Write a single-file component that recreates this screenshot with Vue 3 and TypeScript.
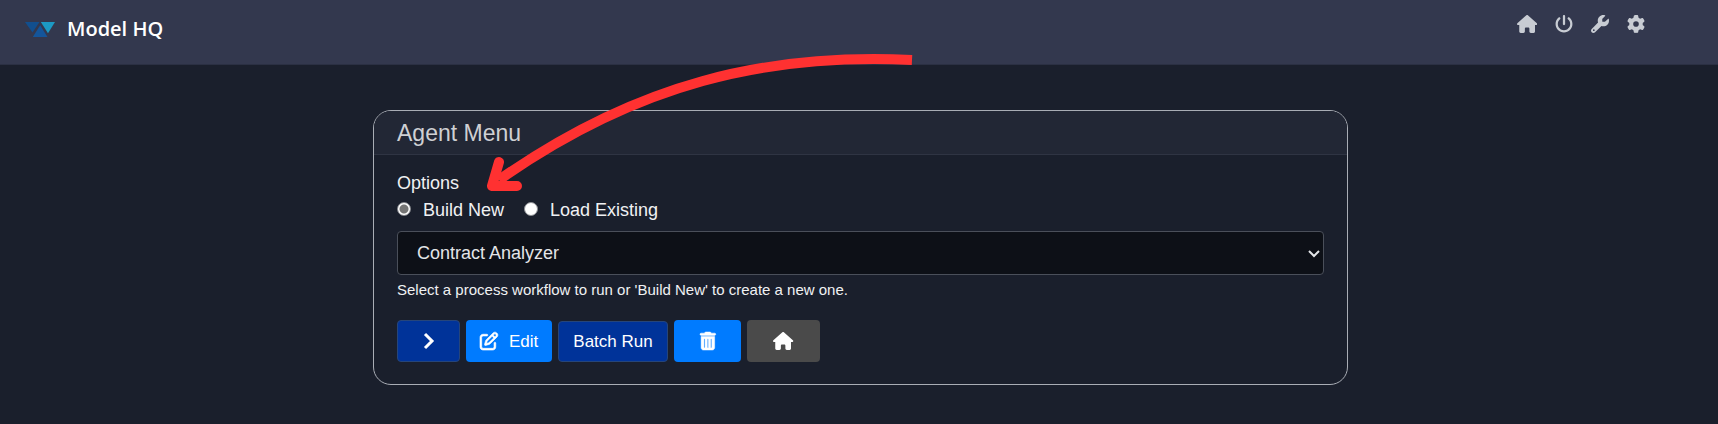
<script setup lang="ts">
import { ref } from 'vue'

interface Icon {
  box: string
  d: string
}

const icons: Record<string, Icon> = {
  home: {
    box: '0 0 576 512',
    d: 'M575.8 255.5c0 18-15 32.1-32 32.1l-32 0 .7 160.2c0 2.7-.2 5.4-.5 8.1l0 16.2c0 22.1-17.9 40-40 40l-16 0c-1.1 0-2.2 0-3.3-.1c-1.4 .1-2.8 .1-4.2 .1L416 512l-24 0c-22.1 0-40-17.9-40-40l0-24 0-64c0-17.7-14.3-32-32-32l-64 0c-17.7 0-32 14.3-32 32l0 64 0 24c0 22.1-17.9 40-40 40l-24 0-31.9 0c-1.5 0-3-.1-4.5-.2c-1.2 .1-2.4 .2-3.6 .2l-16 0c-22.1 0-40-17.9-40-40l0-112c0-.9 0-1.9 .1-2.8l0-69.7-32 0c-18 0-32-14-32-32.1c0-9 3-17 10-24L266.4 8c7-7 15-8 22-8s15 2 21 7L564.8 231.5c8 7 12 15 11 24z',
  },
  power: {
    box: '0 0 512 512',
    d: 'M288 32c0-17.7-14.3-32-32-32s-32 14.3-32 32l0 224c0 17.7 14.3 32 32 32s32-14.3 32-32l0-224zM143.5 120.6c13.6-11.3 15.4-31.5 4.1-45.1s-31.5-15.4-45.1-4.1C49.7 115.4 16 181.8 16 256c0 132.5 107.5 240 240 240s240-107.5 240-240c0-74.2-33.8-140.6-86.6-184.6c-13.6-11.3-33.8-9.4-45.1 4.1s-9.4 33.8 4.1 45.1c38.9 32.3 63.5 81 63.5 135.4c0 97.2-78.8 176-176 176s-176-78.8-176-176c0-54.4 24.7-103.1 63.5-135.4z',
  },
  wrench: {
    box: '0 0 512 512',
    d: 'M352 320c88.4 0 160-71.6 160-160c0-15.3-2.2-30.1-6.2-44.2c-3.1-10.8-16.4-13.2-24.3-5.3l-76.8 76.8c-3 3-7.1 4.7-11.3 4.7L336 192c-8.8 0-16-7.2-16-16l0-57.4c0-4.2 1.7-8.3 4.7-11.3l76.8-76.8c7.9-7.9 5.4-21.2-5.3-24.3C382.1 2.2 367.3 0 352 0C263.6 0 192 71.6 192 160c0 19.1 3.4 37.5 9.5 54.5L19.9 396.1C7.2 408.8 0 426.1 0 444.1C0 481.6 30.4 512 67.9 512c18 0 35.3-7.2 48-19.9L297.5 310.5c17 6.2 35.4 9.5 54.5 9.5zM80 408a24 24 0 1 1 0 48 24 24 0 1 1 0-48z',
  },
  gear: {
    box: '0 0 512 512',
    d: 'M495.9 166.6c3.2 8.7 .5 18.4-6.4 24.6l-43.3 39.4c1.1 8.3 1.7 16.8 1.7 25.4s-.6 17.1-1.7 25.4l43.3 39.4c6.9 6.2 9.6 15.9 6.4 24.6c-4.4 11.9-9.7 23.3-15.8 34.3l-4.7 8.1c-6.6 11-14 21.4-22.1 31.2c-5.9 7.2-15.7 9.6-24.5 6.8l-55.7-17.7c-13.4 10.3-28.2 18.9-44 25.4l-12.5 57.1c-2 9.1-9 16.3-18.2 17.8c-13.8 2.3-28 3.5-42.5 3.5s-28.7-1.2-42.5-3.5c-9.2-1.5-16.2-8.7-18.2-17.8l-12.5-57.1c-15.8-6.5-30.6-15.1-44-25.4L83.1 425.9c-8.8 2.8-18.6 .3-24.5-6.8c-8.1-9.8-15.5-20.2-22.1-31.2l-4.7-8.1c-6.1-11-11.4-22.4-15.8-34.3c-3.2-8.7-.5-18.4 6.4-24.6l43.3-39.4C64.6 273.1 64 264.6 64 256s.6-17.1 1.7-25.4L22.4 191.2c-6.9-6.2-9.6-15.9-6.4-24.6c4.4-11.9 9.7-23.3 15.8-34.3l4.7-8.1c6.6-11 14-21.4 22.1-31.2c5.9-7.2 15.7-9.6 24.5-6.8l55.7 17.7c13.4-10.3 28.2-18.9 44-25.4l12.5-57.1c2-9.1 9-16.3 18.2-17.8C227.3 1.2 241.5 0 256 0s28.7 1.2 42.5 3.5c9.2 1.5 16.2 8.7 18.2 17.8l12.5 57.1c15.8 6.5 30.6 15.1 44 25.4l55.7-17.7c8.8-2.8 18.6-.3 24.5 6.8c8.1 9.8 15.5 20.2 22.1 31.2l4.7 8.1c6.1 11 11.4 22.4 15.8 34.3zM256 336a80 80 0 1 0 0-160 80 80 0 1 0 0 160z',
  },
  edit: {
    box: '0 0 512 512',
    d: 'M441 58.9L453.1 71c9.4 9.4 9.4 24.6 0 33.9L424 134.1 377.9 88 407 58.9c9.4-9.4 24.6-9.4 33.9 0zM209.8 256.2L344 121.9 390.1 168 255.8 302.2c-2.9 2.9-6.5 5-10.4 6.1l-58.5 16.7 16.7-58.5c1.1-3.9 3.2-7.5 6.1-10.4zM373.1 25L175.8 222.2c-8.7 8.7-15 19.4-18.3 31.1l-28.6 100c-2.4 8.4-.1 17.4 6.1 23.6s15.2 8.5 23.6 6.1l100-28.6c11.8-3.4 22.5-9.7 31.1-18.3L487 138.9c28.1-28.1 28.1-73.7 0-101.8L474.9 25C446.8-3.1 401.2-3.1 373.1 25zM88 64C39.4 64 0 103.4 0 152L0 424c0 48.6 39.4 88 88 88l272 0c48.6 0 88-39.4 88-88l0-112c0-13.3-10.7-24-24-24s-24 10.7-24 24l0 112c0 22.1-17.9 40-40 40L88 464c-22.1 0-40-17.9-40-40l0-272c0-22.1 17.9-40 40-40l112 0c13.3 0 24-10.7 24-24s-10.7-24-24-24L88 64z',
  },
  trash: {
    box: '0 0 448 512',
    d: 'M135.2 17.7C140.6 6.8 151.7 0 163.8 0L284.2 0c12.1 0 23.2 6.8 28.6 17.7L320 32l96 0c17.7 0 32 14.3 32 32s-14.3 32-32 32L32 96C14.3 96 0 81.7 0 64S14.3 32 32 32l96 0 7.2-14.3zM32 128l384 0 0 320c0 35.3-28.7 64-64 64L96 512c-35.3 0-64-28.7-64-64l0-320zm96 64c-8.8 0-16 7.2-16 16l0 224c0 8.8 7.2 16 16 16s16-7.2 16-16l0-224c0-8.8-7.2-16-16-16zm96 0c-8.8 0-16 7.2-16 16l0 224c0 8.8 7.2 16 16 16s16-7.2 16-16l0-224c0-8.8-7.2-16-16-16zm96 0c-8.8 0-16 7.2-16 16l0 224c0 8.8 7.2 16 16 16s16-7.2 16-16l0-224c0-8.8-7.2-16-16-16z',
  },
}

const navItems = [
  { icon: 'home', label: 'Home' },
  { icon: 'power', label: 'Power' },
  { icon: 'wrench', label: 'Tools' },
  { icon: 'gear', label: 'Settings' },
]

const modes = [
  { value: 'new', label: 'Build New' },
  { value: 'load', label: 'Load Existing' },
]

const mode = ref<string>('new')
const processName = ref<string>('Contract Analyzer')
</script>

<template>
  <div class="page">
    <header class="topbar">
      <a class="brand" href="#">
        <svg class="logo" viewBox="0 0 30 16" aria-hidden="true">
          <path d="M0 1H14.5L7.5 11.5Z" fill="#124f8e" />
          <path d="M15.2 4.2L22.5 16H7.8Z" fill="#14559a" />
          <path d="M15.8 1H30L23 12.3Z" fill="#1c9ac4" />
        </svg>
        <span>Model HQ</span>
      </a>
      <nav class="nav">
        <a v-for="item in navItems" :key="item.icon" href="#" :aria-label="item.label">
          <svg class="icon" :viewBox="icons[item.icon].box"><path :d="icons[item.icon].d" /></svg>
        </a>
      </nav>
    </header>

    <main class="main">
      <section class="card">
        <h1 class="card-title">Agent Menu</h1>
        <form class="card-body" @submit.prevent>
          <fieldset class="options">
            <legend>Options</legend>
            <label v-for="m in modes" :key="m.value" class="choice">
              <input v-model="mode" type="radio" name="mode" :value="m.value" />
              <span>{{ m.label }}</span>
            </label>
          </fieldset>
          <div class="select-wrap">
            <select v-model="processName" aria-label="Process" aria-describedby="process-hint">
              <option>Contract Analyzer</option>
            </select>
            <svg class="chevron" viewBox="0 0 12 8" aria-hidden="true"><path d="M1 1L6 6L11 1" /></svg>
          </div>
          <p id="process-hint" class="hint">Select a process workflow to run or 'Build New' to create a new one.</p>
          <div class="actions">
            <button class="btn navy next" type="submit" aria-label="Next">
              <svg class="arrow" viewBox="0 0 10 16"><path d="M1 1L8 8L1 15" /></svg>
            </button>
            <button class="btn blue edit" type="button">
              <svg class="icon" :viewBox="icons.edit.box"><path :d="icons.edit.d" /></svg>
              <span>Edit</span>
            </button>
            <button class="btn navy batch" type="button">Batch Run</button>
            <button class="btn blue wide trash" type="button" aria-label="Delete">
              <svg class="icon" :viewBox="icons.trash.box"><path :d="icons.trash.d" /></svg>
            </button>
            <button class="btn gray wide" type="button" aria-label="Home">
              <svg class="icon" :viewBox="icons.home.box"><path :d="icons.home.d" /></svg>
            </button>
          </div>
        </form>
      </section>
      <svg class="pointer" viewBox="0 0 428 140" aria-hidden="true">
        <path d="M425 5C280 -2 150 28 12 125" />
        <path class="head" d="M12 107L5 131L30 131" />
      </svg>
    </main>
  </div>
</template>

<style>
body {
  margin: 0;
  background: #1a1f2c;
}
</style>

<style scoped>
.page {
  min-height: 100vh;
  background: #1a1f2c;
  color: #f0f1f3;
  font: 18px/27px "Liberation Sans", Arial, sans-serif;
}
.page * {
  box-sizing: border-box;
}
.topbar {
  display: flex;
  align-items: flex-start;
  justify-content: space-between;
  height: 65px;
  padding: 15px 73px 0 25px;
  background: #33384e;
  border-bottom: 1px solid #2b3043;
}
.brand {
  display: flex;
  align-items: center;
  gap: 12px;
  color: #fff;
  font: 600 20px/28px "Open Sans", "Segoe UI", sans-serif;
  text-decoration: none;
}
.logo {
  width: 30px;
  height: 16px;
}
.nav {
  display: flex;
  gap: 18px;
}
.nav a {
  display: flex;
  color: #c8ccd3;
}
.icon {
  height: 18px;
  fill: currentColor;
}
.main {
  position: relative;
  padding: 45px 16px 38px 19px;
}
.card {
  max-width: 975px;
  margin: 0 auto;
  border: 1px solid #a9adb5;
  border-radius: 18px;
  overflow: hidden;
}
.card-title {
  margin: 0;
  padding: 9px 23px 7px;
  background: #222735;
  border-bottom: 1px solid #2f3443;
  color: #cfd0d3;
  font-size: 23px;
  font-weight: 400;
  line-height: 27px;
}
.card-body {
  padding: 15px 23px 22px;
}
.options {
  display: flex;
  margin: 0;
  padding: 0;
  border: 0;
}
.options legend {
  padding: 0;
}
.choice {
  display: flex;
  align-items: center;
  margin-right: 20px;
}
.choice input {
  appearance: none;
  width: 14px;
  height: 14px;
  margin: 0 12px 4px 0;
  border: 1px solid #8b8d92;
  border-radius: 50%;
  background: #fff;
}
.choice input:checked {
  background: radial-gradient(circle, #757575 4px, #fff 5px);
}
.select-wrap {
  position: relative;
  margin-top: 7px;
}
select {
  appearance: none;
  display: block;
  width: 100%;
  height: 44px;
  padding: 0 40px 0 19px;
  border: 1px solid #4a4f5a;
  border-radius: 4px;
  background: #0d1017;
  color: #e3e5e8;
  font: inherit;
}
.chevron {
  position: absolute;
  top: 19px;
  right: 4px;
  width: 12px;
  height: 8px;
  fill: none;
  stroke: #e3e5e8;
  stroke-width: 2;
  pointer-events: none;
}
.hint {
  margin: 3px 0 18px;
  font-size: 15px;
  line-height: 24px;
}
.actions {
  display: flex;
  align-items: flex-end;
  gap: 6px;
}
.btn {
  display: flex;
  align-items: center;
  justify-content: center;
  height: 42px;
  padding: 0 14px;
  border: 1px solid transparent;
  border-radius: 4px;
  color: #fff;
  font: inherit;
}
.navy {
  background: #003399;
  border-color: #26457a;
}
.blue {
  background: #007bff;
}
.gray {
  background: #4a4a4a;
}
.next {
  width: 63px;
}
.edit {
  gap: 11px;
  padding: 0 13px;
  font-size: 17px;
}
.edit .icon {
  stroke: currentColor;
  stroke-width: 18;
  overflow: visible;
}
.trash .icon {
  stroke: currentColor;
  stroke-width: 14;
  overflow: visible;
}
.batch {
  height: 41px;
  font-size: 17px;
}
.wide {
  padding: 0 25px;
}
.arrow {
  width: 10px;
  height: 16px;
  fill: none;
  stroke: currentColor;
  stroke-width: 3;
  overflow: visible;
}
.pointer {
  position: absolute;
  top: -10px;
  left: calc(50% - 372px);
  width: 428px;
  height: 140px;
  overflow: visible;
  fill: none;
  stroke: #ff3131;
  stroke-width: 10;
  stroke-linejoin: round;
  pointer-events: none;
}
.pointer .head {
  stroke-linecap: round;
}
</style>
